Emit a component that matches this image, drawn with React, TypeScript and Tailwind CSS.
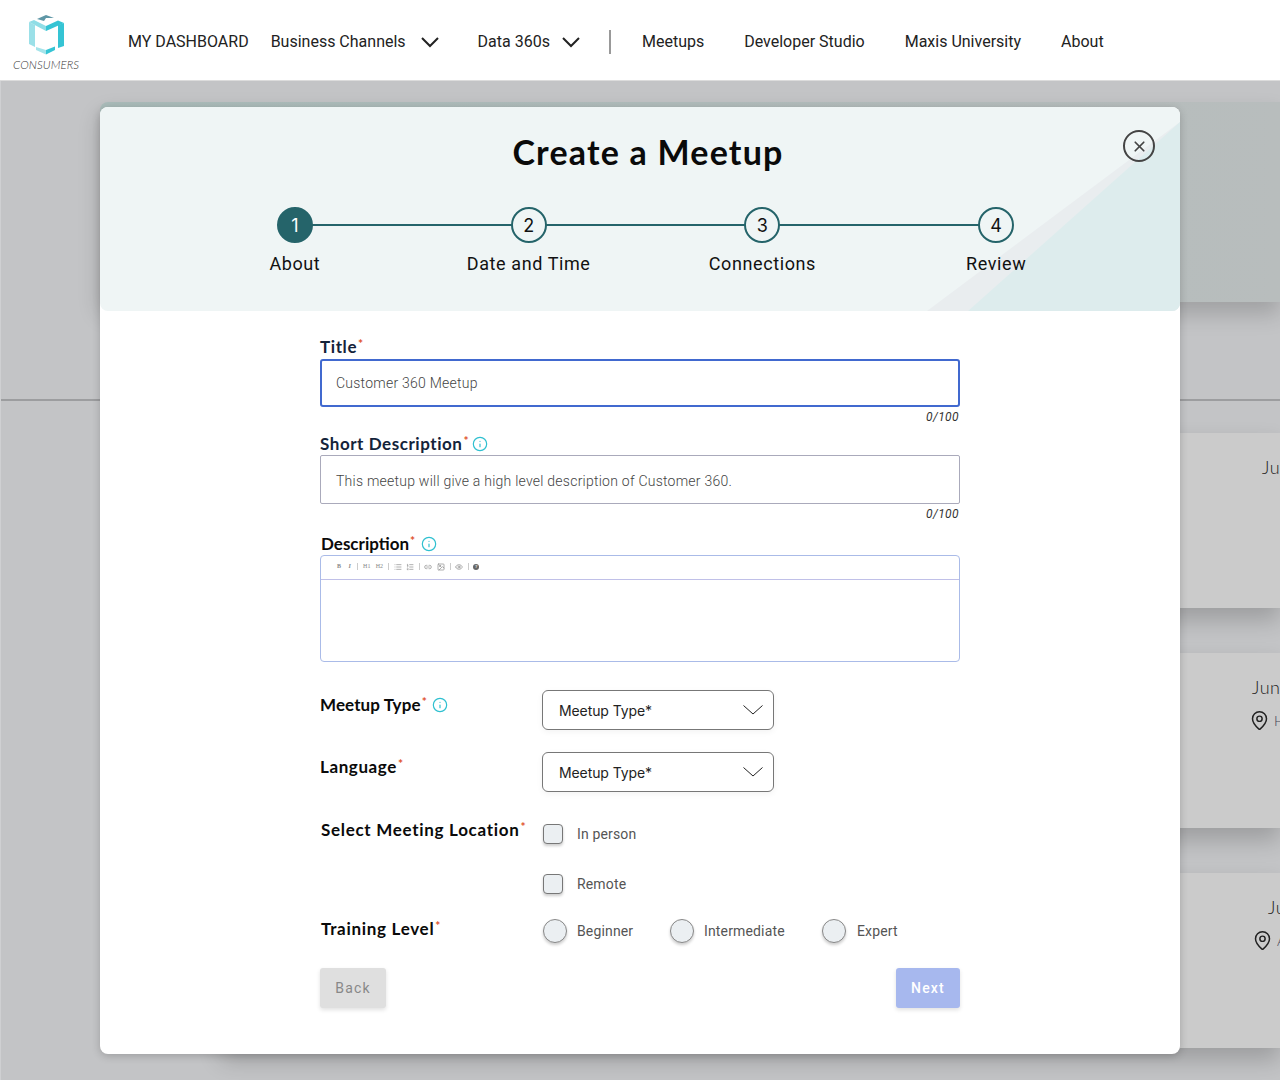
import { Info, Link2, Image, Eye, List, ListOrdered, MapPin, X } from "lucide-react";

const raleway = "font-['Lato','Open_Sans',sans-serif]";

function Logo() {
  return (
    <div className="w-[128px] h-[80px] shrink-0 flex flex-col pt-[15px] pl-[13px]">
      <svg width="67" height="41" viewBox="13 15 67 41" className="shrink-0">
        <polygon points="37,19 46,15 54,18 46,18 44,21" fill="#5f97a6" />
        <polygon points="29,22 34,20 46,26 46,31" fill="#8fdde6" />
        <polygon points="46,26 58,20.5 64,23 46,31" fill="#35c4d4" />
        <polygon points="29,22 35,25 35,47 29,44" fill="#9be0e8" />
        <polygon points="58,25 64,23 64,46 58,48" fill="#35c4d4" />
        <polygon points="36,47 46,50 46,54.5 36,50" fill="#a5e4ea" />
        <polygon points="46,50 55,46.5 55,50 46,54.5" fill="#35c4d4" />
      </svg>
      <span className="font-['Lato',sans-serif] italic font-light text-[11.5px] leading-[16px] text-[#333] mt-[1px] tracking-[0.1px]">CONSUMERS</span>
    </div>
  );
}

function NavChevron({ cls }: { cls: string }) {
  return (
    <svg width="18" height="12" viewBox="0 0 18 12" fill="none" stroke="#222" strokeWidth="2" className={cls}>
      <path d="M1 2 L9 10 L17 2" />
    </svg>
  );
}

function Nav() {
  return (
    <header className="h-[81px] bg-white border-b border-[#dcdcdc] flex items-center font-['Roboto',sans-serif] text-[16px] text-[#222]">
      <Logo />
      <div className="flex items-center pt-[3px]">
        <span className="whitespace-nowrap">MY DASHBOARD</span>
        <span className="ml-[22px] whitespace-nowrap">Business Channels</span>
        <NavChevron cls="ml-[15px]" />
        <span className="ml-[39px] whitespace-nowrap">Data 360s</span>
        <NavChevron cls="ml-[12px]" />
        <span className="ml-[29px] h-[24px] w-[2px] bg-[#999]" />
        <span className="ml-[31px] whitespace-nowrap">Meetups</span>
        <span className="ml-[40px] whitespace-nowrap">Developer Studio</span>
        <span className="ml-[40px] whitespace-nowrap">Maxis University</span>
        <span className="ml-[40px] whitespace-nowrap">About</span>
      </div>
    </header>
  );
}

function BgCard({ date, pin, pad, pinPad = 0 }: { date: string; pin?: string; pad: number; pinPad?: number }) {
  return (
    <div className="h-[175px] ml-[220px] bg-[#cbcbcb] shadow-[0_12px_22px_rgba(0,0,0,0.2)] overflow-hidden font-['Lato',sans-serif] font-light text-[18px] text-[#222] pt-[21px]">
      <div className="whitespace-nowrap tracking-wide" style={{ paddingLeft: pad }}>{date}</div>
      {pin && (
        <div className="flex items-center mt-[9px] whitespace-nowrap text-[14px] text-[#445]" style={{ paddingLeft: pinPad }}>
          <MapPin size={21} strokeWidth={1.7} className="text-[#222] mr-[4px] shrink-0" />
          {pin}
        </div>
      )}
    </div>
  );
}

function Background() {
  return (
    <main className="h-[999px] bg-[#c3c4c6] overflow-hidden border-l border-[#cfd0d2]">
      <div className="ml-[99px] mt-[21px] h-[200px] rounded-tl-lg bg-gradient-to-r from-[#a9bbb9] to-[#b8bdbd] shadow-[0_12px_22px_rgba(0,0,0,0.18)]" />
      <div className="mt-[97px] h-[2px] bg-[#9c9d9f]" />
      <div className="mt-[32px] flex flex-col gap-[45px]">
        <BgCard date="June 12" pad={1041} />
        <BgCard date="June 12" pin="Hyderabad" pad={1031} pinPad={1028} />
        <BgCard date="June 12" pin="Atlanta" pad={1047} pinPad={1031} />
      </div>
    </main>
  );
}

function Step({ n, label, active }: { n: number; label: string; active?: boolean }) {
  return (
    <div className="flex flex-col items-center relative z-10">
      <div
        className={
          "w-[36px] h-[36px] rounded-full border-2 border-[#25646a] flex items-center justify-center text-[18px] font-['Inter',sans-serif] " +
          (active ? "bg-[#25646a] text-white" : "bg-[#eff5f5] text-[#111]")
        }
      >
        {n}
      </div>
      <span className="mt-[9px] text-[18px] leading-[24px] tracking-[0.6px] text-[#111] font-['Roboto',sans-serif] whitespace-nowrap">{label}</span>
    </div>
  );
}

function ModalHeader() {
  return (
    <div className="relative h-[204px] bg-[#eff5f5] rounded-lg overflow-hidden">
      <svg className="absolute inset-0" width="1080" height="204" viewBox="0 0 1080 204">
        <polygon points="827,204 1080,15 1080,204" fill="#e9edef" />
        <polygon points="868,204 1080,15 1080,204" fill="#ddeced" />
      </svg>
      <h1 className={"relative text-center pl-[16px] pt-[23px] pb-[1px] text-[34px] leading-[44px] font-bold tracking-[1.2px] text-[#0a0a0a] " + raleway}>Create a Meetup</h1>
      <button className="absolute left-[1023px] top-[23px] w-[32px] h-[32px] rounded-full border-2 border-[#444] flex items-center justify-center text-[#444]">
        <X size={17} strokeWidth={2.4} />
      </button>
      <div className="relative ml-[78px] w-[935px] mt-[32px] grid grid-cols-4">
        <div className="absolute left-[117px] right-[117px] top-[17px] h-[2px] bg-[#25646a]" />
        <Step n={1} label="About" active />
        <Step n={2} label="Date and Time" />
        <Step n={3} label="Connections" />
        <Step n={4} label="Review" />
      </div>
    </div>
  );
}

function Label({ text, info, color = "text-[#0a0a0a]", cls = "tracking-[0.3px]", infoCls = "ml-[6px]" }: { text: string; info?: boolean; color?: string; cls?: string; infoCls?: string }) {
  return (
    <div className={"flex items-center h-[20px] text-[17px] font-bold whitespace-nowrap " + raleway + " " + color + " " + cls}>
      <span>{text}</span>
      <span className="text-[#e0502c] text-[12px] self-start leading-[14px] ml-[1px]">*</span>
      {info && <Info size={16} strokeWidth={1.8} className={infoCls + " text-[#2fc0d0]"} />}
    </div>
  );
}

function Counter() {
  return <div className="h-[20px] text-right pr-[1px] text-[12px] italic leading-[20px] tracking-[0.4px] text-[#333]">0/100</div>;
}

function Toolbar() {
  const sep = <span className="w-px h-[7px] bg-[#ccc]" />;
  const ic = "text-[#888]";
  return (
    <div className="h-[24px] pb-[2px] border-b border-[#c0c0e8] flex items-center gap-[4.6px] pl-[15px] text-[6px] font-bold text-[#888] font-['Liberation_Serif',serif]">
      <span className="w-[6px] text-center">B</span>
      <span className="w-[6px] text-center italic">I</span>
      {sep}
      <span className="w-[8px] text-center font-normal">H1</span>
      <span className="w-[8px] text-center font-normal">H2</span>
      {sep}
      <List size={8} className={ic} />
      <ListOrdered size={8} className={ic} />
      {sep}
      <Link2 size={8} className={ic} />
      <Image size={8} className={ic} />
      {sep}
      <Eye size={8} className={ic} />
      {sep}
      <span className="w-[6px] h-[6px] rounded-full bg-[#666] text-white text-[5px] leading-[6px] text-center">?</span>
    </div>
  );
}

function Select() {
  return (
    <div className="w-[232px] h-[40px] border border-[#777] rounded-[6px] flex items-center justify-between pl-[16px] pr-[10px] bg-white shadow-[0_2px_6px_rgba(0,0,0,0.05)] text-[14px] tracking-[-0.1px] text-[#222] font-['Inter',sans-serif]">
      <span>Meetup Type*</span>
      <svg width="20" height="10" viewBox="0 0 20 10" fill="none" stroke="#222" strokeWidth="1">
        <path d="M0.5 0.5 L10 9 L19.5 0.5" />
      </svg>
    </div>
  );
}

function Check({ label }: { label: string }) {
  return (
    <div className="flex items-center h-[21px]">
      <span className="w-[20px] h-[20px] ml-[1px] rounded-[4px] border border-[#777] bg-[#ebeff2] shadow-[0_2px_3px_rgba(0,0,0,0.2)]" />
      <span className="ml-[14px] pt-[2px] text-[14px] tracking-[0.15px] text-[#555]">{label}</span>
    </div>
  );
}

function Radio({ label, width, gap = "ml-[10px]" }: { label: string; width: string; gap?: string }) {
  return (
    <div className={"flex items-center " + width}>
      <span className="w-[24px] h-[24px] ml-[1px] rounded-full border border-[#888] bg-[#ebeff2] shadow-[0_2px_3px_rgba(0,0,0,0.2)] shrink-0" />
      <span className={gap + " text-[14px] tracking-[0.15px] text-[#555] whitespace-nowrap"}>{label}</span>
    </div>
  );
}

function Form() {
  return (
    <form className="ml-[220px] w-[640px] pt-[26px] font-['Roboto',sans-serif]">
      <Label text="Title" color="text-[#14233a]" cls="tracking-[0.6px]" />
      <div className="mt-[2px] h-[48px] rounded-[3px] border-2 border-[#4169cf] flex items-center pl-[14px] text-[14px] font-light tracking-[0.24px] text-[#444]">Customer 360 Meetup</div>
      <Counter />
      <div className="mt-[7px]">
        <Label text="Short Description" info color="text-[#14233a]" cls="tracking-[0.55px]" infoCls="ml-[3px]" />
      </div>
      <div className="mt-[1px] h-[49px] rounded-[2px] border border-[#aab] flex items-center pl-[15px] pt-[3px] text-[14px] font-light tracking-[0.24px] text-[#444]">This meetup will give a high level description of Customer 360.</div>
      <Counter />
      <div className="mt-[10px]">
        <Label text="Description" info cls="ml-[1px] tracking-normal" />
      </div>
      <div className="mt-[1px] h-[107px] rounded-[4px] border border-[#aabbe8]">
        <Toolbar />
      </div>
      <div className="mt-[28px] flex">
        <div className="w-[222px] pt-[5px]"><Label text="Meetup Type" info cls="tracking-[0.1px]" infoCls="ml-[5px]" /></div>
        <Select />
      </div>
      <div className="mt-[22px] flex">
        <div className="w-[222px] pt-[5px]"><Label text="Language" cls="tracking-[0.6px]" /></div>
        <Select />
      </div>
      <div className="mt-[31px] flex">
        <div className="w-[222px] pl-[1px] -mt-[3px]"><Label text="Select Meeting Location" cls="tracking-[0.7px]" /></div>
        <div className="flex flex-col gap-[29px]">
          <Check label="In person" />
          <Check label="Remote" />
        </div>
      </div>
      <div className="mt-[25px] flex">
        <div className="w-[222px] pl-[1px]"><Label text="Training Level" cls="tracking-[0.7px]" /></div>
        <div className="flex">
          <Radio label="Beginner" width="w-[127px]" />
          <Radio label="Intermediate" width="w-[152px]" />
          <Radio label="Expert" width="w-[90px]" gap="ml-[11px]" />
        </div>
      </div>
      <div className="mt-[25px] flex justify-between">
        <div className="w-[66px] h-[40px] rounded-[3px] bg-[#dfdfdf] shadow-[0_2px_4px_rgba(0,0,0,0.12)] flex items-center justify-center text-[14px] tracking-[1.2px] text-[#888]">Back</div>
        <div className="w-[64px] h-[40px] rounded-[3px] bg-[#a7b8ee] shadow-[0_2px_4px_rgba(0,0,0,0.12)] flex items-center justify-center text-[14px] font-medium tracking-[1.2px] text-white">Next</div>
      </div>
    </form>
  );
}

export default function App() {
  return (
    <div className="relative w-[1280px] h-[1080px] overflow-hidden">
      <Nav />
      <Background />
      <div className="absolute left-[100px] top-[107px] w-[1080px] h-[947px] bg-white rounded-lg shadow-[0_2px_8px_rgba(0,0,0,0.2)]">
        <ModalHeader />
        <Form />
      </div>
    </div>
  );
}
